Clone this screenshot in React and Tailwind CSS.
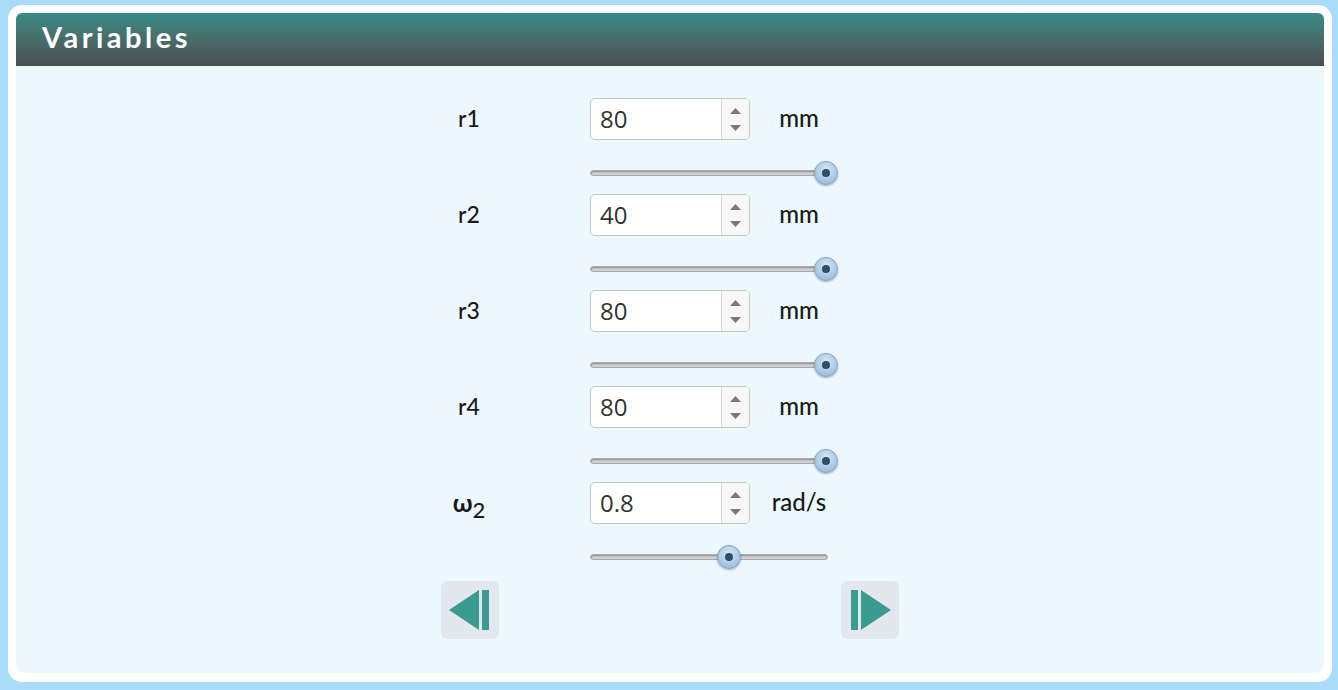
import React from 'react';

const rows = [
  { label: 'r1', value: '80', unit: 'mm', pos: 1 },
  { label: 'r2', value: '40', unit: 'mm', pos: 1 },
  { label: 'r3', value: '80', unit: 'mm', pos: 1 },
  { label: 'r4', value: '80', unit: 'mm', pos: 1 },
  { label: 'omega', value: '0.8', unit: 'rad/s', pos: 0.57 },
];

function Spinner() {
  return (
    <div className="flex flex-col items-center justify-center w-[28px] h-full border-l border-[#d6d6d6] bg-[#f7f7f7] rounded-r-[4px] gap-[11px]">
      <svg width="11" height="6" viewBox="0 0 11 6">
        <path d="M5.5 0 L11 6 L0 6 Z" fill="#7a7a7a" />
      </svg>
      <svg width="11" height="6" viewBox="0 0 11 6">
        <path d="M0 0 L11 0 L5.5 6 Z" fill="#7a7a7a" />
      </svg>
    </div>
  );
}

function Slider({ pos }) {
  // thumb centre travels from 11px to 236px of the 238px track
  const left = 11 + pos * 225;
  return (
    <div className="relative w-[240px] h-[24px] ml-[149px]">
      <div className="absolute left-0 right-[2px] top-[9px] h-[6px] rounded-full bg-[#d4d4d4] border border-[#a9a9a9] shadow-[inset_0_1px_2px_rgba(0,0,0,0.35)]" />
      <div
        className="absolute top-0 w-[24px] h-[24px] -ml-[12px] rounded-full border border-[#7ea3c2] bg-[radial-gradient(circle_at_50%_35%,#d7e9f7_0%,#a7c8e3_60%,#8fb4d4_100%)] shadow-[0_1px_2px_rgba(0,0,0,0.3)] flex items-center justify-center"
        style={{ left: `${left}px` }}
      >
        <div className="w-[8px] h-[8px] rounded-full bg-[#2f4d66]" />
      </div>
    </div>
  );
}

function Row({ label, value, unit, pos }) {
  return (
    <div className="flex flex-col">
      <div className="flex items-center h-[42px]">
        <div className="w-[56px] text-center text-[23px] leading-none pb-[2px] text-[#1a1a1a] font-medium" style={{ fontFamily: 'Lato, sans-serif' }}>
          {label === 'omega' ? (
            <span>
              <span className="font-bold text-[25px]">ω</span>
              <span className="text-[22px] relative top-[6px]">2</span>
            </span>
          ) : (
            label
          )}
        </div>
        <div className="ml-[93px] w-[160px] h-[42px] flex bg-white border border-[#c8c8c8] rounded-[5px]">
          <div className="flex-1 flex items-center pl-[9px] text-[24px] text-[#333]" style={{ fontFamily: '"Open Sans", sans-serif' }}>
            {value}
          </div>
          <Spinner />
        </div>
        <div className="ml-[21px] w-[56px] text-center text-[24px] leading-none pb-[2px] text-[#1a1a1a] font-medium" style={{ fontFamily: 'Lato, sans-serif' }}>
          {unit}
        </div>
      </div>
      <div className="mt-[21px] mb-[9px]">
        <Slider pos={pos} />
      </div>
    </div>
  );
}

function NavButton({ dir }) {
  return (
    <button className="w-[58px] h-[58px] rounded-[6px] bg-[#e3e8ef] flex items-center justify-center">
      {dir === 'prev' ? (
        <svg width="42" height="44" viewBox="0 0 42 44">
          <path d="M0 22 L30 2 L30 42 Z" fill="#3a9c90" />
          <rect x="33" y="2" width="7" height="40" fill="#3a9c90" />
        </svg>
      ) : (
        <svg width="42" height="44" viewBox="0 0 42 44">
          <rect x="2" y="2" width="7" height="40" fill="#3a9c90" />
          <path d="M12 2 L42 22 L12 42 Z" fill="#3a9c90" />
        </svg>
      )}
    </button>
  );
}

export default function App() {
  return (
    <div className="w-[1338px] h-[690px] bg-[#a9dcf9] pl-[8px] pt-[5px]">
      <div className="w-[1324px] h-[677px] bg-white rounded-[14px] p-[8px] pb-[9px] flex flex-col">
        <div className="h-[53px] rounded-t-[6px] bg-gradient-to-b from-[#368c87] to-[#4b4e4f] flex items-center pl-[26px] pb-[5px]">
          <span className="text-white text-[29px] font-bold tracking-[3.5px]" style={{ fontFamily: 'Lato, sans-serif' }}>
            Variables
          </span>
        </div>
        <div className="flex-1 bg-[#edf8fe] rounded-b-[8px] flex justify-center pt-[32px]">
          <div className="w-[458px] flex flex-col">
            {rows.map((r) => (
              <Row key={r.label} {...r} />
            ))}
            <div className="flex justify-between mt-[3px]">
              <NavButton dir="prev" />
              <NavButton dir="next" />
            </div>
          </div>
        </div>
      </div>
    </div>
  );
}
